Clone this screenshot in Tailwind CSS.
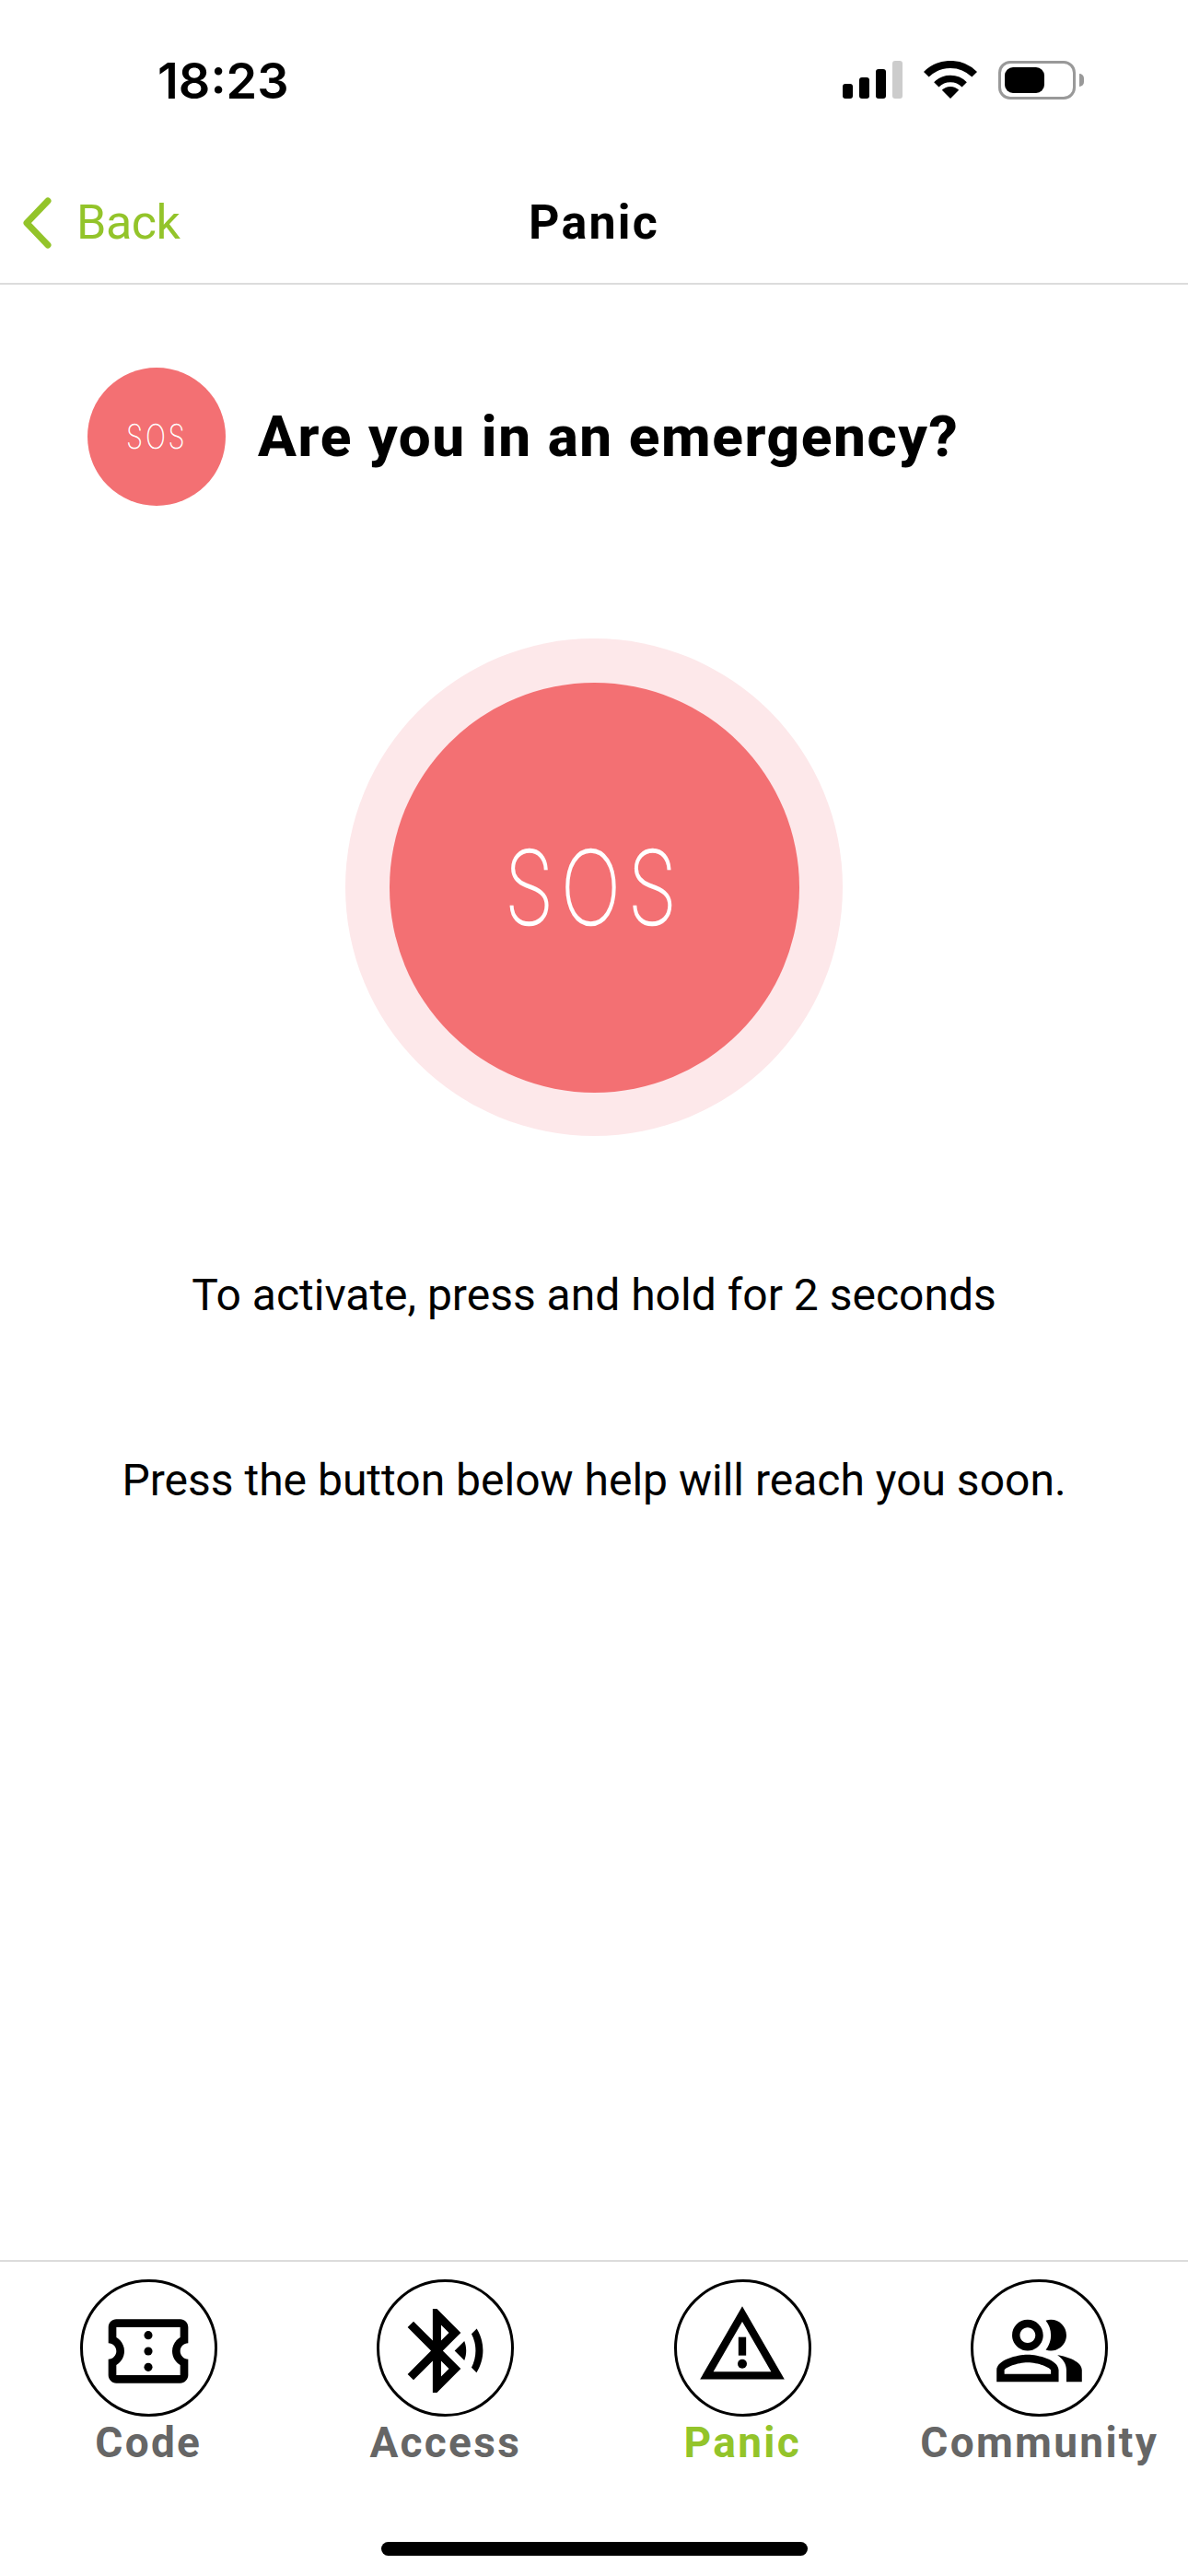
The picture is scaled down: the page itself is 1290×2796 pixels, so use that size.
<!DOCTYPE html>
<html>

<head>
    <meta charset='UTF-8'>
    <title>Panic</title>
    <script src="https://cdn.jsdelivr.net/npm/@tailwindcss/browser@4"></script>
</head>

<body class='bg-white'>
    <div class='w-[1290px] h-[2796px] flex flex-col font-["Roboto",sans-serif] text-black overflow-hidden'>

        <!-- status bar -->
        <div class='h-[174px] flex justify-between pt-[56px] pl-[171px] pr-[113px] shrink-0'>
            <span class='font-["Inter",sans-serif] font-semibold text-[54px] leading-[64px]'>18:23</span>
            <div class='flex items-start gap-[23px] pt-[10px]'>
                <div class='flex items-end gap-[7px] h-[41px]'>
                    <div class='w-[11px] h-[16px] rounded-[3px] bg-black'></div>
                    <div class='w-[11px] h-[23px] rounded-[3px] bg-black'></div>
                    <div class='w-[11px] h-[32px] rounded-[3px] bg-black'></div>
                    <div class='w-[11px] h-[41px] rounded-[3px] bg-[#cccccc]'></div>
                </div>
                <svg class='w-[58px] h-[41px]' viewBox='0 0 58 41' fill='none'>
                    <path d='M2.8 14.8a37 37 0 0 1 52.4 0' stroke='#000' stroke-width='8' />
                    <path d='M13.8 25.8a21.5 21.5 0 0 1 30.4 0' stroke='#000' stroke-width='7.5' />
                    <path d='M29 41 19.8 31.8a13 13 0 0 1 18.4 0z' fill='#000' />
                </svg>
                <div class='flex items-center gap-[4px]'>
                    <div class='w-[84px] h-[42px] rounded-[13px] border-[3px] border-[#999999] p-[4px]'>
                        <div class='w-[43px] h-full rounded-[9px] bg-black'></div>
                    </div>
                    <div class='w-[5px] h-[14px] rounded-r-full bg-[#999999]'></div>
                </div>
            </div>
        </div>

        <!-- header -->
        <div class='h-[135px] grid grid-cols-3 items-center border-b-2 border-[#dcdcdc] pt-[3px] shrink-0'>
            <div class='flex items-center pl-[24px] gap-[26px] text-[#93c42a]'>
                <svg class='w-[33px] h-[56px]' viewBox='0 0 33 56' fill='none'>
                    <path d='M28 4 5 28l23 24' stroke='#93c42a' stroke-width='7' stroke-linecap='round' stroke-linejoin='round' />
                </svg>
                <span class='text-[52px] leading-[60px] tracking-[-0.5px]'>Back</span>
            </div>
            <span class='text-center font-bold text-[52px] leading-[60px] tracking-[2.2px]'>Panic</span>
            <div></div>
        </div>

        <!-- content -->
        <main class='flex-1 flex flex-col items-center'>
            <div class='w-full flex items-center gap-[35px] pl-[95px] pt-[90px]'>
                <div class='w-[150px] h-[150px] rounded-full bg-[#f37073] flex items-center justify-center'>
                    <span class='font-["Inter",sans-serif] font-thin text-white text-[36px] leading-none tracking-[4px] scale-x-[0.8] [-webkit-text-stroke:0.7px_#ffffff]'>SOS</span>
                </div>
                <h1 class='font-extrabold text-[62px] leading-[70px] tracking-[1.6px]'>Are you in an emergency?</h1>
            </div>

            <div class='mt-[144px] w-[540px] h-[540px] rounded-full bg-[#fde8ea] flex items-center justify-center'>
                <div class='w-[445px] h-[445px] rounded-full bg-[#f37073] flex items-center justify-center'>
                    <span class='font-["Inter",sans-serif] font-thin text-white text-[110px] leading-none tracking-[10px] scale-x-[0.79] [-webkit-text-stroke:2.5px_#ffffff]'>SOS</span>
                </div>
            </div>

            <p class='mt-[144px] text-[48px] leading-[58px]'>To activate, press and hold for 2 seconds</p>
            <p class='mt-[143px] text-[48px] leading-[58px]'>Press the button below help will reach you soon.</p>
        </main>

        <!-- tab bar -->
        <nav class='h-[343px] border-t-2 border-[#dcdcdc] shrink-0 flex flex-col'>
            <div class='grid grid-cols-4 pt-[19px]'>
                <div class='flex flex-col items-center'>
                    <div class='w-[149px] h-[149px] rounded-full border-[3px] border-black flex items-center justify-center'>
                        <svg class='w-[104px] h-[104px] mt-[6px]' viewBox='0 0 24 24' fill='#000'>
                            <path d='M22 10V6c0-1.11-.9-2-2-2H4c-1.1 0-1.99.89-1.99 2v4c1.1 0 1.99.9 1.99 2s-.89 2-2 2v4c0 1.1.9 2 2 2h16c1.1 0 2-.9 2-2v-4c-1.1 0-2-.9-2-2s.9-2 2-2zm-2-1.46c-1.19.69-2 1.99-2 3.46s.81 2.77 2 3.46V18H4v-2.54c1.19-.69 2-1.99 2-3.46 0-1.48-.8-2.77-1.99-3.46L4 6h16v2.54z' />
                            <circle cx='12' cy='8' r='1.05' />
                            <circle cx='12' cy='12' r='1.05' />
                            <circle cx='12' cy='16' r='1.05' />
                        </svg>
                    </div>
                    <span class='mt-[1px] font-bold text-[46px] leading-[54px] tracking-[2.3px] text-[#666666]'>Code</span>
                </div>
                <div class='flex flex-col items-center'>
                    <div class='w-[149px] h-[149px] rounded-full border-[3px] border-black flex items-center justify-center'>
                        <svg class='w-[109px] h-[109px] mt-[6px]' viewBox='0 0 24 24' fill='#000'>
                            <path d='M14.24 12.01l2.32 2.32c.28-.72.44-1.51.44-2.33 0-.82-.16-1.59-.43-2.31l-2.33 2.32zm5.29-5.3l-1.26 1.26c.63 1.21.98 2.57.98 4.02s-.36 2.82-.98 4.02l1.2 1.2c.97-1.54 1.54-3.36 1.54-5.31-.01-1.89-.55-3.67-1.48-5.19zm-3.82 1L10 2H9v7.59L4.41 5 3 6.41 8.59 12 3 17.59 4.41 19 9 14.41V22h1l5.71-5.71-4.3-4.29 4.3-4.29zM11 5.83l1.88 1.88L11 9.59V5.83zm1.88 10.46L11 18.17v-3.76l1.88 1.88z' />
                        </svg>
                    </div>
                    <span class='mt-[1px] font-bold text-[46px] leading-[54px] tracking-[2.3px] text-[#666666]'>Access</span>
                </div>
                <div class='flex flex-col items-center'>
                    <div class='w-[149px] h-[149px] rounded-full border-[3px] border-black flex items-center justify-center'>
                        <svg class='w-[100px] h-[100px] mb-[8px]' viewBox='0 0 24 24' fill='#000'>
                            <path d='M12 5.99 19.53 19H4.47L12 5.99M12 2 1 21h22L12 2z' />
                            <path d='M11 10h2v4.8h-2z' />
                            <circle cx='12' cy='17' r='1.2' />
                        </svg>
                    </div>
                    <span class='mt-[1px] font-bold text-[46px] leading-[54px] tracking-[2.3px] text-[#93c42a]'>Panic</span>
                </div>
                <div class='flex flex-col items-center'>
                    <div class='w-[149px] h-[149px] rounded-full border-[3px] border-black flex items-center justify-center'>
                        <svg class='w-[101px] h-[101px] mt-[6px]' viewBox='0 0 24 24' fill='#000'>
                            <path d='M16.67 13.13C18.04 14.06 19 15.32 19 17v3h4v-3c0-2.18-3.57-3.47-6.33-3.87z' />
                            <path d='M15 12c2.21 0 4-1.79 4-4s-1.79-4-4-4c-.47 0-.91.1-1.33.24C14.5 5.27 15 6.58 15 8s-.5 2.73-1.33 3.76c.42.14.86.24 1.33.24z' />
                            <path d='M9 12c2.21 0 4-1.79 4-4s-1.79-4-4-4-4 1.79-4 4 1.79 4 4 4zm0-6c1.1 0 2 .9 2 2s-.9 2-2 2-2-.9-2-2 .9-2 2-2z' />
                            <path d='M9 13c-2.67 0-8 1.34-8 4v3h16v-3c0-2.66-5.33-4-8-4zm6 5H3v-.99C3.2 16.29 6.3 15 9 15s5.8 1.29 6 2v1z' />
                        </svg>
                    </div>
                    <span class='mt-[1px] font-bold text-[46px] leading-[54px] tracking-[2.3px] text-[#666666]'>Community</span>
                </div>
            </div>
            <div class='mt-[81px] mx-auto w-[463px] h-[15px] rounded-full bg-black'></div>
        </nav>
    </div>
</body>

</html>
